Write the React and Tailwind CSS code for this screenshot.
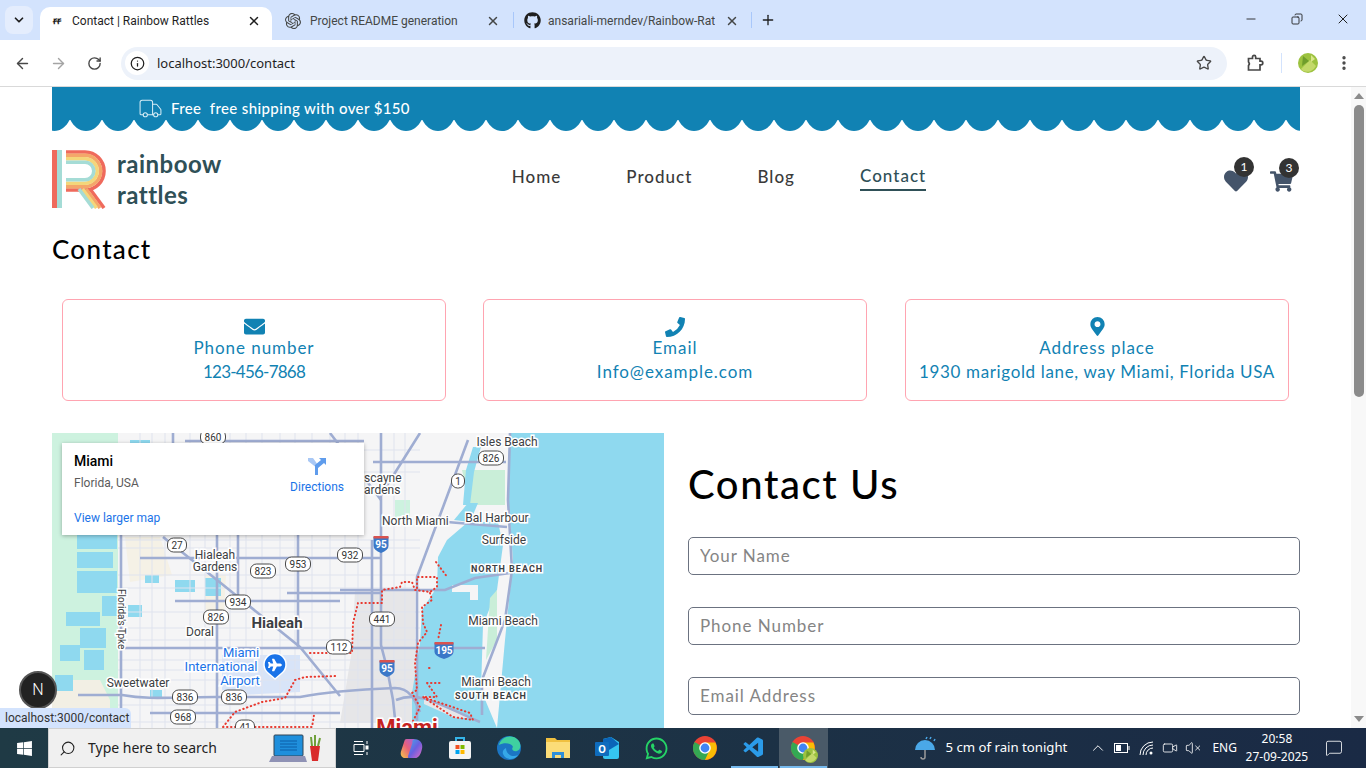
import {
  ArrowLeft, ArrowRight, RotateCw, Info, Star, EllipsisVertical, ChevronDown, ChevronUp,
  X, Plus, Minus, Copy, Search, VolumeX, MessageSquare, Truck, Video,
} from "lucide-react";
import { FaEnvelope, FaPhoneAlt, FaMapMarkerAlt, FaHeart, FaShoppingCart, FaGithub, FaWhatsapp, FaWindows, FaPlane } from "react-icons/fa";
import { SiOpenai } from "react-icons/si";
import { VscVscode } from "react-icons/vsc";

const site = "font-['Lato',sans-serif]";

function Chrome({ size = 24 }) {
  return (
    <svg width={size} height={size} viewBox="0 0 24 24">
      <circle cx="12" cy="12" r="12" fill="#ea4335" />
      <path d="M12 12 L1.6 6 A12 12 0 0 0 12 24 L18 13.5 Z" fill="#34a853" />
      <path d="M12 6.5 H22.4 A12 12 0 0 1 12 24 L17 13 Z" fill="#fbbc04" />
      <circle cx="12" cy="12" r="5.8" fill="#fff" />
      <circle cx="12" cy="12" r="4.4" fill="#4285f4" />
    </svg>
  );
}

function Avatar({ size = 20 }) {
  return (
    <svg width={size} height={size} viewBox="0 0 20 20">
      <circle cx="10" cy="10" r="10" fill="#9cc23f" />
      <path d="M3 16 L12 7 L18 13 A10 10 0 0 1 5 18 Z" fill="#c3d96a" />
      <path d="M5 3 L11 8 L4 13 Z" fill="#6f9d2c" />
      <path d="M13 2 L17 6 L13 9 Z" fill="#d9e68a" />
    </svg>
  );
}

function TabStrip() {
  return (
    <div className="flex h-10 shrink-0 items-end bg-[#d3e3fd] font-['Roboto',sans-serif] text-xs text-[#1f1f1f]">
      <div className="mb-[6px] ml-[5px] mr-[7px] flex h-7 w-7 items-center justify-center rounded-lg bg-[#e4edfd]">
        <ChevronDown size={14} strokeWidth={3} />
      </div>
      <div className="flex h-[33px] w-[232px] items-center rounded-t-[10px] bg-white pb-[6px] pl-[13px] pr-[11px]">
        <span className="w-[19px] text-[10px] font-bold">ꞧꞧ</span>
        <span className="flex-1">Contact | Rainbow Rattles</span>
        <X size={14} strokeWidth={2.5} />
      </div>
      <div className="flex h-[33px] w-[241px] items-center pb-[6px] pl-[13px] pr-[13px] text-[#444746]">
        <SiOpenai size={16} className="mr-[9px]" />
        <span className="flex-1">Project README generation</span>
        <X size={14} strokeWidth={2.5} />
      </div>
      <div className="mb-[12px] h-[16px] w-px bg-[#a8c7fa]" />
      <div className="flex h-[33px] w-[237px] items-center pb-[6px] pl-[10px] pr-[12px] text-[#444746]">
        <FaGithub size={17} className="mr-[7px] text-[#1f1f1f]" />
        <span className="w-[167px] overflow-hidden whitespace-nowrap">ansariali-merndev/Rainbow-Rat</span>
        <X size={14} strokeWidth={2.5} className="ml-auto" />
      </div>
      <div className="mb-[12px] h-[16px] w-px bg-[#a8c7fa]" />
      <div className="mb-[12px] ml-2 flex h-[16px] items-center">
        <Plus size={16} strokeWidth={2} />
      </div>
      <div className="mb-[13px] ml-auto flex items-center">
        <div className="flex w-[46px] justify-center"><Minus size={14} strokeWidth={1.5} /></div>
        <div className="flex w-[46px] justify-center"><Copy size={12} strokeWidth={1.75} className="-scale-x-100" /></div>
        <div className="flex w-[46px] justify-center"><X size={16} strokeWidth={1.5} /></div>
      </div>
    </div>
  );
}

function NavBar() {
  return (
    <div className="flex h-[47px] shrink-0 items-center border-b border-[#d9d9d9] bg-white text-[#474747]">
      <div className="flex w-[121px] items-center pl-[14px]">
        <ArrowLeft size={17} strokeWidth={2} />
        <ArrowRight size={17} strokeWidth={2} className="ml-[19px] text-[#a4a4a4]" />
        <RotateCw size={15} strokeWidth={2.2} className="ml-[20px]" />
      </div>
      <div className="flex h-[33px] w-[1106px] items-center rounded-full bg-[#edf2fa] pl-1 pr-[15px]">
        <div className="flex h-6 w-6 items-center justify-center rounded-full bg-white">
          <Info size={15} strokeWidth={2} className="text-[#1f1f1f]" />
        </div>
        <span className="ml-2 pt-px font-['Noto_Sans',sans-serif] text-[13px] text-[#1f1f1f]">localhost:3000/contact</span>
        <Star size={16} strokeWidth={2} className="ml-auto" />
      </div>
      <svg width="18" height="18" viewBox="0 0 18 18" className="ml-[19px]" fill="none" stroke="#474747" strokeWidth="1.7">
        <path d="M2.5 4.5 H6.5 V3 A1.6 1.6 0 0 1 9.7 3 V4.5 H14 V7.2 H15 A1.8 1.8 0 0 1 15 10.8 H14 V16 H2.5 V11.5 A2.5 2.5 0 0 0 2.5 8 Z" />
      </svg>
      <div className="ml-[17px] h-[20px] w-px bg-[#d3e3fd]" />
      <div className="ml-[16px]"><Avatar /></div>
      <EllipsisVertical size={18} strokeWidth={2.5} className="ml-[17px]" />
    </div>
  );
}

function Scallops() {
  const peaks = Array.from({ length: 40 }, (_, i) => -14 + i * 32);
  return (
    <svg width="1248" height="11" viewBox="0 0 1248 11" className="block">
      {peaks.map((x) => (
        <path key={x} d={`M${x} -1 C${x + 3} 6 ${x + 9} 11 ${x + 16} 11 C${x + 23} 11 ${x + 29} 6 ${x + 32} -1 Z`} fill="#1182b3" />
      ))}
    </svg>
  );
}

function Logo() {
  const bands = [
    { c: "#ef6a5c", o: 0 },
    { c: "#f4a76a", o: 3.4 },
    { c: "#f4d67a", o: 6.8 },
    { c: "#a5dcd6", o: 10.2 },
  ];
  return (
    <div className="flex w-[170px] items-center">
      <svg width="57" height="60" viewBox="52 149 57 60" className="shrink-0">
        <rect x="52" y="150" width="5" height="58" fill="#ef6a5c" />
        <rect x="57" y="150" width="5" height="58" fill="#a5dcd6" />
        {bands.map((b) => (
          <path
            key={b.c}
            d={`M66 ${152 + b.o} H85 A${19 - b.o} ${19 - b.o} 0 0 1 85 ${190 - b.o} H66`}
            fill="none"
            stroke={b.c}
            strokeWidth="3.6"
          />
        ))}
        <path d="M90 189 L104 208" stroke="#ef6a5c" strokeWidth="3.6" fill="none" />
        <path d="M86 189 L100 208" stroke="#f4a76a" strokeWidth="3.6" fill="none" />
        <path d="M82.5 189 L96.5 208" stroke="#f4d67a" strokeWidth="3.6" fill="none" />
        <path d="M79 189 L93 208" stroke="#a5dcd6" strokeWidth="3.6" fill="none" />
      </svg>
      <div className="ml-2 text-[24px] font-bold leading-[31px] tracking-[0.02em] text-[#2f5057]">
        rainboow
        <br />
        rattles
      </div>
    </div>
  );
}

function Badge({ n }) {
  return (
    <span className="absolute -right-[6px] -top-[12px] flex h-5 w-5 items-center justify-center rounded-full bg-[#333] text-xs text-white">
      {n}
    </span>
  );
}

function Header() {
  return (
    <div className="mt-[19px] flex h-[58px] items-center justify-between">
      <Logo />
      <nav className="mb-[4px] flex items-center gap-[65px] text-[17px] font-medium tracking-[0.06em] text-[#3a3a3a]">
        <span>Home</span>
        <span>Product</span>
        <span>Blog</span>
        <span className="border-b-2 border-[#2f5057] text-[#2f5057]">Contact</span>
      </nav>
      <div className="flex w-[84px] items-center justify-end gap-[22px] pt-[4px] pr-[7px] text-[#44546a]">
        <div className="relative"><FaHeart size={24} /><Badge n="1" /></div>
        <div className="relative"><FaShoppingCart size={23} /><Badge n="3" /></div>
      </div>
    </div>
  );
}

function InfoCard({ icon, label, value, valueClass }) {
  return (
    <div className="flex h-[102px] w-[384px] shrink-0 flex-col items-center rounded-md border border-[#ffa4b1] pt-[17px] text-[17px] leading-6 tracking-[0.055em] text-[#1182b3]">
      <div className="flex h-[19px] items-center">{icon}</div>
      <span>{label}</span>
      <span className={`whitespace-nowrap ${valueClass}`}>{value}</span>
    </div>
  );
}

function Label({ x, y, t, size = 12, bold, fill = "#3c4043", anchor = "middle", spacing, rotate }) {
  return (
    <text
      x={x}
      y={y}
      textAnchor={anchor}
      fontSize={size}
      fontWeight={bold ? 700 : 400}
      fill={fill}
      letterSpacing={spacing}
      transform={rotate ? `rotate(${rotate} ${x} ${y})` : undefined}
      className="stroke-white stroke-[3px] [paint-order:stroke]"
    >
      {t}
    </text>
  );
}

function Shield({ x, y, t }) {
  const w = t.length * 6 + 7;
  return (
    <g>
      <rect x={x - w / 2} y={y - 7} width={w} height="14" rx="6" fill="#fff" stroke="#4a4a4a" />
      <text x={x} y={y + 3.5} textAnchor="middle" fontSize="10" fill="#333">{t}</text>
    </g>
  );
}

function Interstate({ x, y, t }) {
  const w = t.length === 3 ? 19 : 15;
  return (
    <g>
      <path d={`M${x - w / 2} ${y - 7} H${x + w / 2} V${y + 2} Q${x + w / 2} ${y + 6} ${x} ${y + 9} Q${x - w / 2} ${y + 6} ${x - w / 2} ${y + 2} Z`} fill="#3b78c8" />
      <rect x={x - w / 2} y={y - 8} width={w} height="2.5" fill="#d9534f" />
      <text x={x} y={y + 4} textAnchor="middle" fontSize="10" fontWeight="700" fill="#fff">{t}</text>
    </g>
  );
}

function MapArt() {
  const minorX = [140, 152, 165, 190, 205, 230, 246, 262, 280, 295, 312, 330, 345, 358, 394, 405];
  const minorY = [450, 472, 540, 548, 575, 588, 612, 628, 640, 660, 670, 680, 705, 722];
  const lakes = [
    [77, 535, 40, 14], [77, 552, 36, 16], [77, 571, 40, 22], [102, 596, 16, 20], [66, 612, 34, 14],
    [80, 628, 26, 20], [84, 650, 20, 20], [55, 675, 18, 16], [130, 440, 20, 14], [205, 578, 16, 18],
    [175, 580, 20, 12], [128, 605, 14, 12], [150, 690, 12, 8], [145, 575, 14, 8], [60, 645, 20, 16],
  ];
  const major = [
    "M173 433 V443 M121 535 V728",
    "M175 601 H340 M125 648 H300",
    "M217 535 V728",
    "M78 695 H122 C150 700 170 697 215 697 H300 C320 693 345 690 395 688 C410 688 415 700 420 712",
    "M381 433 V645 L387 668 L393 700 L396 728",
    "M163 537 L217 580 L300 647 L340 696",
    "M300 648 H485",
    "M468 440 L417 577 V728",
    "M373 462 H506 M447 522 L507 527",
    "M340 590 H445 L475 578 L510 573",
    "M510 433 L508 500 L512 570 L505 620 L482 680 L482 715",
    "M185 441 H364 M140 558 H380 M287 593 H382",
    "M150 713 H340 M330 433 L381 500 M420 433 L381 495",
    "M372 540 V728 M298 535 V648 M238 535 V600",
    "M396 700 C420 690 440 705 480 722",
  ];
  const red = [
    "M223 727 L235 712 L262 702 L285 698 L295 680 L305 677 L338 676 M223 727 H312 L314 715",
    "M310 653 H352 L353 623 L358 603 H382 V590 L400 587 L402 582 H412 L415 590 L430 592 L437 587 V577 H417 V590",
    "M430 593 L432 600 L422 607 L423 623 L427 632 L418 643 L415 663 L417 690 L412 693 L420 707 L412 723",
    "M427 683 H443 M427 683 L437 697 H423 L453 717 L473 720 L470 713 L423 697",
    "M436 562 L448 578 M441 625 L438 640 M429 668 H430",
  ];
  return (
    <svg width="612" height="295" viewBox="52 433 612 295" className="block" fontFamily="Roboto, sans-serif">
      <rect x="52" y="433" width="612" height="295" fill="#f5f5f6" />
      <path d="M52 433 H118 V728 H52 Z" fill="#cdf2df" />
      <path d="M125 537 H160 L172 575 L130 582 Z M205 575 H226 L224 612 H205 Z" fill="#f5f1e6" />
      <path d="M52 680 H100 L110 700 V728 H52 Z" fill="#f2efe4" />
      {lakes.map(([x, y, w, h]) => (
        <rect key={`${x}-${y}`} x={x} y={y} width={w} height={h} fill="#8fd9ef" />
      ))}
      <path d="M355 590 H415 V723 H340 L352 650 Z" fill="#e6e6e8" />
      <path d="M222 655 H300 V692 L240 695 L222 690 Z" fill="#d8e4f8" />
      <path d="M462 470 H505 V505 H470 Z" fill="#c9eed8" />
      <path d="M395 500 H410 V520 H395 Z" fill="#cdf2df" />
      {minorX.map((x) => <path key={x} d={`M${x} 433 V728`} stroke="#dfe3ee" strokeWidth="1" />)}
      {minorY.map((y) => <path key={y} d={`M118 ${y} H420`} stroke="#dfe3ee" strokeWidth="1" />)}
      <path d="M510 433 H664 V728 H497 L505 640 L513 560 L508 497 Z" fill="#8fd9ef" />
      <path d="M468 522 L498 522 L503 545 L497 590 L483 625 L481 690 L497 728 H412 V693 L420 643 L422 610 L437 587 L438 557 L447 540 Z" fill="#8fd9ef" />
      <path d="M473 447 H481 L474 472 L470 505 H463 L466 470 Z" fill="#8fd9ef" />
      <path d="M454 520 L468 503 H478 L470 522 Z" fill="#8fd9ef" />
      <path d="M490 598 L497 590 V640 L486 660 Z" fill="#c9eed8" />
      <path d="M470 585 H478 V600 H470 Z M452 585 H475 V592 H452 Z" fill="#f5f5f6" />
      <path d="M424 695 L472 718 H455 L424 704 Z" fill="#e6e6e8" />
      {major.map((d) => <path key={d} d={d} fill="none" stroke="#9fadd2" strokeWidth="2.6" />)}
      {red.map((d) => (
        <path key={d} d={d} fill="none" stroke="#e8392f" strokeWidth="2" strokeLinecap="round" strokeDasharray="0.5 3.5" />
      ))}
      <Label x={507} y={446} t="Isles Beach" />
      <Label x={364} y={482} t="scayne" anchor="start" />
      <Label x={364} y={494} t="ardens" anchor="start" />
      <Label x={382} y={525} t="North Miami" anchor="start" />
      <Label x={497} y={522} t="Bal Harbour" />
      <Label x={504} y={544} t="Surfside" />
      <Label x={507} y={572} t="NORTH BEACH" size={9} bold spacing={1} />
      <Label x={503} y={625} t="Miami Beach" />
      <Label x={496} y={686} t="Miami Beach" />
      <Label x={491} y={699} t="SOUTH BEACH" size={9} bold spacing={1} />
      <Label x={215} y={559} t="Hialeah" />
      <Label x={215} y={571} t="Gardens" />
      <Label x={200} y={636} t="Doral" />
      <Label x={277} y={628} t="Hialeah" size={15} bold />
      <Label x={138} y={687} t="Sweetwater" />
      <Label x={118} y={589} t="Florida's Tpke" size={10} rotate={90} anchor="start" />
      <Label x={241} y={657} t="Miami" size={13} fill="#1a73e8" />
      <Label x={221} y={671} t="International" size={13} fill="#1a73e8" />
      <Label x={240} y={685} t="Airport" size={13} fill="#1a73e8" />
      <text x="407" y="735" textAnchor="middle" fontSize="22" fontWeight="700" fill="#c5221f" className="stroke-white stroke-[3px] [paint-order:stroke]">Miami</text>
      <Shield x={213} y={437} t="860" />
      <Shield x={491} y={458} t="826" />
      <Shield x={458} y={481} t="1" />
      <Shield x={177} y={545} t="27" />
      <Shield x={350} y={555} t="932" />
      <Shield x={298} y={564} t="953" />
      <Shield x={263} y={571} t="823" />
      <Shield x={238} y={602} t="934" />
      <Shield x={216} y={617} t="826" />
      <Shield x={339} y={647} t="112" />
      <Shield x={382} y={619} t="441" />
      <Shield x={185} y={697} t="836" />
      <Shield x={234} y={697} t="836" />
      <Shield x={183} y={717} t="968" />
      <Shield x={245} y={727} t="41" />
      <Interstate x={381} y={544} t="95" />
      <Interstate x={444} y={650} t="195" />
      <Interstate x={387} y={668} t="95" />
      <path d="M275 679 L268 673 A11 11 0 1 1 282 673 Z" fill="#1a73e8" stroke="#fff" strokeWidth="1.5" />
      <FaPlane x={268} y={658} size={14} color="#fff" />
    </svg>
  );
}

function MapPanel() {
  return (
    <div className="relative h-[295px] overflow-hidden">
      <MapArt />
      <div className="absolute left-[10px] top-[10px] h-[92px] w-[302px] bg-white font-['Roboto',sans-serif] shadow-[0_1px_4px_rgba(0,0,0,0.3)]">
        <div className="absolute left-3 top-2 text-sm font-medium text-black">Miami</div>
        <div className="absolute left-3 top-8 text-xs text-[#5b5b5b]">Florida, USA</div>
        <div className="absolute bottom-[9px] left-3 text-xs text-[#1a73e8]">View larger map</div>
        <div className="absolute right-5 top-[13px] flex flex-col items-center text-xs text-[#1a73e8]">
          <svg width="20" height="20" viewBox="0 0 20 20">
            <path d="M1 2 H6 L11 9 V19 H8 V10.5 L1 5 Z" fill="#a9c8f5" />
            <path d="M8 19 V9 L14 4 L12 2 H19 V9 L17 7 L11 12 V19 Z" fill="#5f9cec" />
          </svg>
          <span className="mt-[3px]">Directions</span>
        </div>
      </div>
    </div>
  );
}

function ContactForm() {
  return (
    <div>
      <h2 className="mt-[28px] text-[40px] font-medium leading-[46px] tracking-[0.04em] text-black">Contact Us</h2>
      <div className="mt-[30px] flex flex-col gap-8">
        {["Your Name", "Phone Number", "Email Address"].map((p) => (
          <input
            key={p}
            placeholder={p}
            className="h-[38px] w-full rounded-[5px] border border-[#6b7280] pb-[2px] pl-[11px] pr-3 text-[17px] tracking-[0.055em] placeholder:text-[#858585]"
          />
        ))}
      </div>
    </div>
  );
}

function Scrollbar() {
  return (
    <div className="flex w-[15px] shrink-0 flex-col items-center bg-[#f8f8f8] py-[6px]">
      <div className="h-0 w-0 border-x-[5px] border-b-[6px] border-x-transparent border-b-[#8b8b8b]" />
      <div className="mt-[6px] h-[292px] w-[10px] rounded-full bg-[#8b8b8b]" />
      <div className="mt-auto h-0 w-0 border-x-[5px] border-t-[6px] border-x-transparent border-t-[#8b8b8b]" />
    </div>
  );
}

function Page() {
  return (
    <div className="relative flex min-h-0 flex-1 bg-white">
      <div className={`min-w-0 flex-1 overflow-hidden pl-[52px] pr-[51px] ${site}`}>
        <div className="flex h-[33px] items-center bg-[#1182b3] pl-[86px] pt-[10px] text-[15px] font-medium tracking-[0.025em] text-white">
          <Truck size={25} strokeWidth={1} className="mr-2 text-[#d5ecf5]" />
          <span className="whitespace-pre">Free  free shipping with over $150</span>
        </div>
        <Scallops />
        <Header />
        <h1 className="mt-[26px] h-[30px] text-[26px] font-medium leading-[30px] tracking-[0.05em] text-black">Contact</h1>
        <div className="ml-[10px] mt-[35px] flex">
          <InfoCard icon={<FaEnvelope size={21} />} label="Phone number" value="123-456-7868" valueClass="tracking-[-0.045em]" />
          <div className="ml-[37px] mr-[38px]">
            <InfoCard icon={<FaPhoneAlt size={20} className="-scale-x-100" />} label="Email" value="Info@example.com" valueClass="" />
          </div>
          <InfoCard icon={<FaMapMarkerAlt size={19} />} label="Address place" value="1930 marigold lane, way Miami, Florida USA" valueClass="tracking-[0.038em]" />
        </div>
        <div className="mt-8 grid grid-cols-2 gap-6">
          <MapPanel />
          <ContactForm />
        </div>
      </div>
      <Scrollbar />
      <div className="absolute left-[19px] top-[584px] flex h-[38px] w-[38px] items-center justify-center rounded-full border-2 border-[#555] bg-[#222] font-['Roboto',sans-serif] text-base font-light text-white">
        N
      </div>
      <div className="absolute bottom-0 left-0 flex h-5 w-[131px] items-center rounded-tr-md bg-[#d3e3fd] pl-[5px] font-['Roboto',sans-serif] text-xs text-[#333]">
        localhost:3000/contact
      </div>
    </div>
  );
}

function Copilot() {
  return (
    <svg width="23" height="23" viewBox="0 0 24 24">
      <defs>
        <linearGradient id="cpa" x1="0" y1="0" x2="1" y2="1">
          <stop offset="0" stopColor="#3fb0e8" />
          <stop offset="0.5" stopColor="#6a5fe0" />
          <stop offset="1" stopColor="#e86ac0" />
        </linearGradient>
        <linearGradient id="cpb" x1="0" y1="1" x2="1" y2="0">
          <stop offset="0" stopColor="#f7c948" />
          <stop offset="0.5" stopColor="#e8607a" />
          <stop offset="1" stopColor="#a45fe0" />
        </linearGradient>
      </defs>
      <path d="M7 2 H14 C17 2 16 5 15 8 L12 18 C11 21 9 22 6 22 C2 22 0 19 1 15 L4 6 C5 3 5 2 7 2 Z" fill="url(#cpb)" />
      <path d="M13 4 C15 2 17 2 19 3 C22 4 24 8 23 12 C22 17 20 21 17 22 H10 C8 22 8 20 9 18 L13 6 Z" fill="url(#cpa)" />
    </svg>
  );
}

function StoreIcon() {
  return (
    <svg width="24" height="24" viewBox="0 0 24 24">
      <path d="M8 6 V2 H16 V6" fill="none" stroke="#35b4e8" strokeWidth="2" />
      <rect x="1" y="5" width="22" height="18" rx="2" fill="#f4f4f4" />
      <rect x="7.5" y="9" width="4" height="4" fill="#f25022" />
      <rect x="12.5" y="9" width="4" height="4" fill="#7fba00" />
      <rect x="7.5" y="14" width="4" height="4" fill="#00a4ef" />
      <rect x="12.5" y="14" width="4" height="4" fill="#ffb900" />
    </svg>
  );
}

function EdgeIcon() {
  return (
    <svg width="24" height="24" viewBox="0 0 24 24">
      <circle cx="12" cy="12" r="12" fill="#1b76c4" />
      <path d="M2 9 C4 1 14 -2 20 3 C25 7 24 14 20 15 C16 16 14 13 16 11 C15 7 7 6 2 9 Z" fill="#3fd0a0" />
      <path d="M9 12 C9 18 15 22 21 19 C18 24 9 25 6 18 C5 15 7 13 9 12 Z" fill="#35a8e8" />
    </svg>
  );
}

function FolderIcon() {
  return (
    <svg width="24" height="22" viewBox="0 0 24 22">
      <path d="M0 1 H9 L11 3 H24 V21 H0 Z" fill="#f0c040" />
      <path d="M0 5 H24 V21 H0 Z" fill="#fbdc78" />
      <path d="M6 21 V15 H18 V21 H15 V18 H9 V21 Z" fill="#2f8fd8" />
    </svg>
  );
}

function OutlookIcon() {
  return (
    <svg width="24" height="24" viewBox="0 0 24 24">
      <path d="M8 3 L16 1 L24 6 V21 A2 2 0 0 1 22 23 H10 A2 2 0 0 1 8 21 Z" fill="#35c5f0" />
      <path d="M8 3 L16 1 L24 8 L14 14 L8 10 Z" fill="#0a64b8" />
      <rect x="0" y="6" width="14" height="14" rx="1" fill="#0f6cbd" />
      <text x="7" y="17" textAnchor="middle" fontSize="11" fontWeight="700" fill="#fff" fontFamily="Roboto, sans-serif">O</text>
    </svg>
  );
}

function TaskIcon({ children, active, underline }) {
  return (
    <div className={`relative flex h-10 w-[49px] items-center justify-center ${active ? "bg-[#4a5a68]" : ""}`}>
      {children}
      {underline && <div className="absolute inset-x-[1px] bottom-0 h-[2px] bg-[#76b9ed]" />}
    </div>
  );
}

function Taskbar() {
  return (
    <div className="flex h-10 shrink-0 items-center bg-linear-to-r from-[#1f3a45] to-[#1a2a45] font-['Noto_Sans',sans-serif] text-white">
      <div className="flex w-[48px] justify-center"><FaWindows size={17} /></div>
      <div className="flex h-10 w-[288px] items-center border border-[#d0d0d0] bg-[#f0f0f0] pl-[10px] text-[#222]">
        <Search size={17} strokeWidth={1.5} className="-scale-x-100" />
        <span className="ml-[12px] text-sm">Type here to search</span>
        <svg width="52" height="30" viewBox="0 0 52 30" className="ml-auto mr-[14px]">
          <rect x="5" y="2" width="29" height="21" rx="1" fill="#1f8fdc" stroke="#345" />
          <path d="M11 8 H28 M11 11 H28 M11 14 H28 M11 17 H28" stroke="#0d5fa8" />
          <path d="M3 23 H36 L38 29 H0 Z" fill="#8f92b5" />
          <path d="M41 13 H51 L49 28 H43 Z" fill="#d92b2b" />
          <path d="M43 13 L42 4 M46 13 V2 M49 13 L51 5" stroke="#6fa03a" strokeWidth="2" />
        </svg>
      </div>
      <TaskIcon>
        <svg width="16" height="16" viewBox="0 0 16 16" fill="none" stroke="#fff">
          <path d="M1 1.5 H10 M1 14.5 H10 M1 4.5 H11 V11.5 H1 Z M14 1 V4 M14 12 V15" />
          <rect x="13" y="6" width="2" height="3" fill="#fff" />
        </svg>
      </TaskIcon>
      <div className="w-[1.5px]" />
      <TaskIcon><Copilot /></TaskIcon>
      <TaskIcon><StoreIcon /></TaskIcon>
      <TaskIcon><EdgeIcon /></TaskIcon>
      <TaskIcon><FolderIcon /></TaskIcon>
      <TaskIcon><OutlookIcon /></TaskIcon>
      <TaskIcon><FaWhatsapp size={25} color="#25d366" /></TaskIcon>
      <TaskIcon><Chrome /></TaskIcon>
      <TaskIcon underline><VscVscode size={24} color="#2b9be9" /></TaskIcon>
      <TaskIcon active underline>
        <div className="relative">
          <Chrome />
          <div className="absolute -bottom-[3px] -right-[3px]"><Avatar size={15} /></div>
        </div>
      </TaskIcon>
      <svg width="24" height="24" viewBox="0 0 24 24" className="ml-[86px]">
        <path d="M1 14 A10 10 0 0 1 21 14 Z" fill="#4aa8e8" />
        <path d="M11 14 V21 A2 2 0 0 1 7 21" fill="none" stroke="#9a9a9a" strokeWidth="1.5" />
        <path d="M13 1 L12 3 M17 1 L16 3 M21 3 L20 5" stroke="#4aa8e8" strokeWidth="1.5" />
      </svg>
      <span className="ml-2 text-[13.2px]">5 cm of rain tonight</span>
      <ChevronUp size={18} strokeWidth={1.25} className="ml-[22px]" />
      <svg width="16" height="10" viewBox="0 0 16 10" className="ml-[7px]" fill="none" stroke="#fff">
        <rect x="0.5" y="0.5" width="13" height="9" />
        <rect x="2" y="2" width="5" height="6" fill="#fff" stroke="none" />
        <path d="M15 3 V7" />
      </svg>
      <svg width="15" height="15" viewBox="0 0 15 15" className="ml-[9px]" fill="none" stroke="#fff" strokeWidth="1">
        <path d="M1 14 A13 13 0 0 1 14 1 M4 14 A10 10 0 0 1 14 4 M7 14 A7 7 0 0 1 14 7" />
        <circle cx="12" cy="12" r="1.5" fill="#fff" stroke="none" />
      </svg>
      <Video size={16} strokeWidth={1.25} className="ml-2" />
      <VolumeX size={16} strokeWidth={1.25} className="ml-[7px]" />
      <span className="ml-[11px] text-xs">ENG</span>
      <div className="ml-[5px] flex w-[70px] flex-col items-center text-xs leading-[18px]">
        <span>20:58</span>
        <span>27-09-2025</span>
      </div>
      <MessageSquare size={18} strokeWidth={1.1} className="ml-[13px]" />
    </div>
  );
}

export default function App() {
  return (
    <div className="flex h-screen w-full flex-col overflow-hidden font-['Noto_Sans',sans-serif]">
      <TabStrip />
      <NavBar />
      <Page />
      <Taskbar />
    </div>
  );
}
